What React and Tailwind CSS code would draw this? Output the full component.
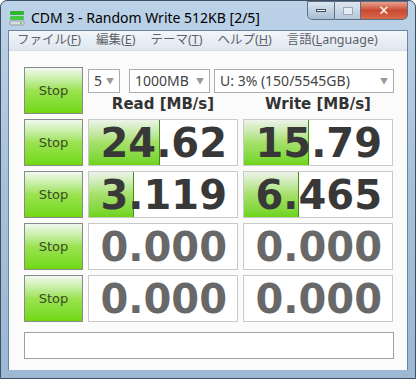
const rows = [
  { read: "24.62", write: "15.79", rBar: 71, wBar: 65, active: true },
  { read: "3.119", write: "6.465", rBar: 45, wBar: 55, active: true },
  { read: "0.000", write: "0.000", rBar: 0, wBar: 0, active: false },
  { read: "0.000", write: "0.000", rBar: 0, wBar: 0, active: false },
];

const ui = { fontFamily: '"Noto Sans", "Noto Sans CJK JP", sans-serif' };
const num = { fontFamily: '"DejaVu Sans", sans-serif' };

function StopButton() {
  return (
    <div className="w-[59px] h-[47px] border border-[#8a8a8a] bg-gradient-to-b from-[#f2f8ee] via-[#9be34e] to-[#6fd80a] flex items-center justify-center">
      <span className="text-[13px] text-[#3b4a2c]" style={num}>Stop</span>
    </div>
  );
}

function Score({ value, bar, active }) {
  return (
    <div className="relative w-[150px] h-[47px] border border-[#c9c9c9] bg-white overflow-hidden">
      {bar > 0 && (
        <div
          className="absolute left-0 top-0 bottom-0 bg-gradient-to-b from-[#eef3ea] via-[#a6e06a] to-[#6ed414] border-r border-[#3f8f12]"
          style={{ width: bar }}
        />
      )}
      <div
        className={`relative h-full flex items-center justify-end pr-[10px] text-[40px] font-bold leading-none ${active ? "text-[#383838]" : "text-[#686868]"}`}
        style={num}
      >
        {value}
      </div>
    </div>
  );
}

function Select({ w, children }) {
  return (
    <div className={`${w} h-[24px] border border-[#acacac] bg-white flex items-center justify-between pl-[5px] pr-[5px] text-[14px] text-[#444]`} style={ui}>
      <span>{children}</span>
      <span className="text-[8px] text-[#999]">▼</span>
    </div>
  );
}

function WinBtn({ className, children }) {
  return (
    <div className={`h-[19px] flex items-center justify-center border border-[#5b6f86] ${className}`}>{children}</div>
  );
}

export default function App() {
  return (
    <div className="w-[416px] h-[379px] bg-[#a9c3dc] bg-gradient-to-b from-[#bcd2e8] via-[#a7c1da] to-[#9db8d3] rounded-t-[7px] border border-[#3d4f63] flex flex-col overflow-hidden">
      <div className="h-[29px] flex items-start justify-between shrink-0">
        <div className="flex items-center gap-[6px] pl-[8px] pt-[6px]">
          <svg width="16" height="16" viewBox="0 0 16 16">
            <rect x="1" y="1" width="14" height="4" rx="1" fill="#2fb52f" />
            <rect x="1" y="6" width="14" height="4" rx="1" fill="#46c746" />
            <rect x="1" y="11" width="14" height="4" rx="1" fill="#d8dde0" stroke="#8a949b" strokeWidth="0.8" />
            <rect x="11" y="12.5" width="2" height="1.2" fill="#4caf50" />
          </svg>
          <span className="text-[14px] text-black" style={ui}>CDM 3 - Random Write 512KB [2/5]</span>
        </div>
        <div className="flex mr-[7px] rounded-b-[5px] overflow-hidden">
          <WinBtn className="w-[28px] bg-gradient-to-b from-[#dce7f2] to-[#a9bdd2] rounded-bl-[5px]">
            <div className="w-[10px] h-[3px] bg-white border border-[#3e4d5d]" />
          </WinBtn>
          <WinBtn className="w-[26px] bg-gradient-to-b from-[#dde7f1] to-[#b5c7d9] border-l-0">
            <div className="w-[10px] h-[8px] border border-[#9aa9b9] bg-[#e5edf5]" />
          </WinBtn>
          <WinBtn className="w-[47px] bg-gradient-to-b from-[#e8a08c] via-[#c94a30] to-[#d86a48] border-l-0 rounded-br-[5px]">
            <span className="text-white font-bold text-[13px] leading-none" style={num}>✕</span>
          </WinBtn>
        </div>
      </div>
      <div className="mx-[7px] flex-1 flex flex-col border border-[#6c849d] border-b-0">
        <div className="h-[20px] bg-gradient-to-b from-[#f3f6fa] to-[#dfe7f0] border-b border-[#d6dfe9] flex items-center gap-[15px] pl-[8px] text-[12.5px] text-[#5d6168]" style={ui}>
          <span>ファイル(<u>F</u>)</span>
          <span>編集(<u>E</u>)</span>
          <span>テーマ(<u>T</u>)</span>
          <span>ヘルプ(<u>H</u>)</span>
          <span>言語(<u>L</u>anguage)</span>
        </div>
        <div className="flex-1 bg-[#fbfbfb] pl-[15px] pt-[16px] flex flex-col gap-[5px]">
          <div className="flex gap-[5px] h-[47px]">
            <StopButton />
            <div className="flex flex-col">
              <div className="flex items-center h-[25px] mt-[1px]">
                <Select w="w-[32px]">5</Select>
                <div className="w-[9px]" />
                <Select w="w-[81px]">1000MB</Select>
                <div className="w-[4px]" />
                <Select w="w-[180px]">U: 3% (150/5545GB)</Select>
              </div>
              <div className="flex gap-[5px] mt-[2px] h-[18px] leading-[18px] text-[15px] font-bold text-[#333]" style={num}>
                <div className="w-[150px] text-center">Read [MB/s]</div>
                <div className="w-[150px] text-center">Write [MB/s]</div>
              </div>
            </div>
          </div>
          {rows.map((r, i) => (
            <div key={i} className="flex gap-[5px]">
              <StopButton />
              <Score value={r.read} bar={r.rBar} active={r.active} />
              <Score value={r.write} bar={r.wBar} active={r.active} />
            </div>
          ))}
          <div className="mt-[5px] w-[370px] h-[27px] border border-[#a0a0a0] bg-white" />
        </div>
      </div>
      <div className="h-[8px] shrink-0" />
    </div>
  );
}
